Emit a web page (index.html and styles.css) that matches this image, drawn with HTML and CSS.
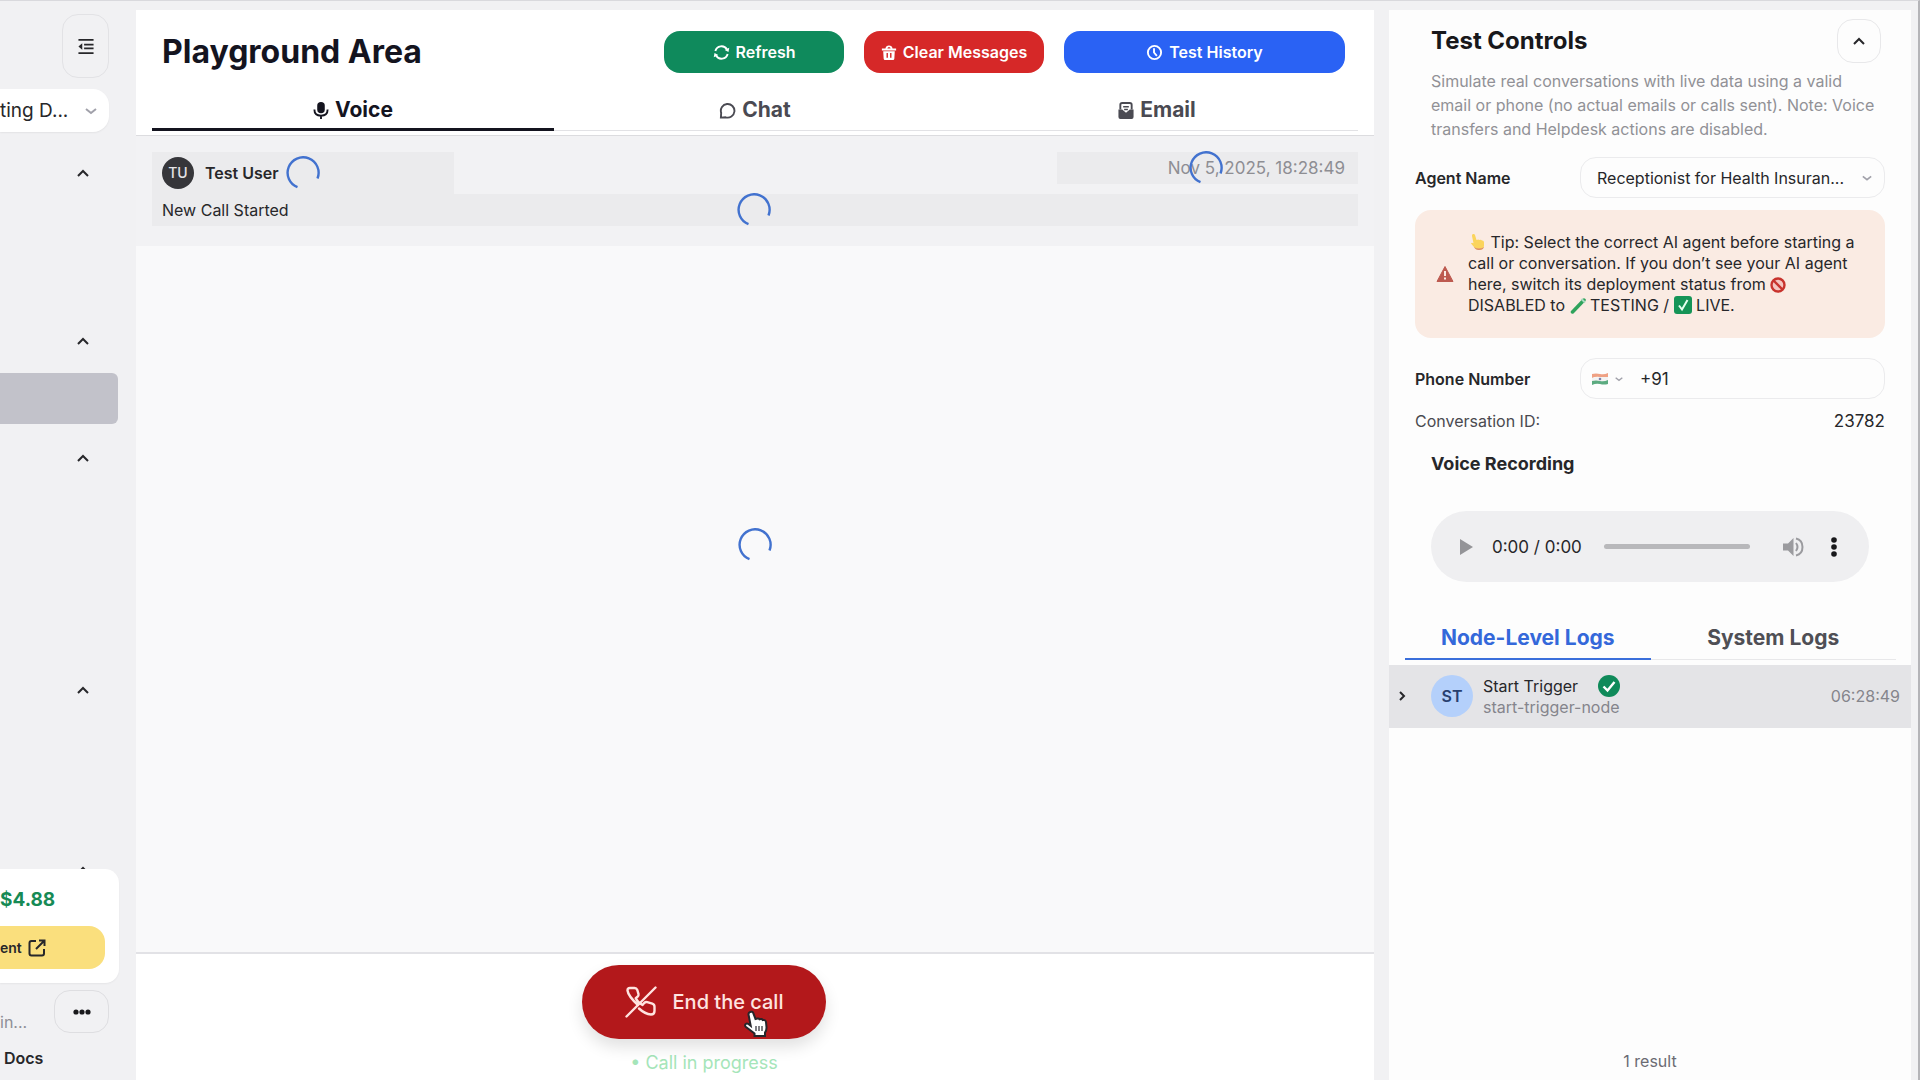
FILE: index.html
```html
<!DOCTYPE html>
<html lang="en">
<head>
    <meta charset="UTF-8">
    <meta name="viewport" content="width=device-width, initial-scale=1.0">
    <title>Playground Area</title>
    <link rel="stylesheet" href="styles.css">
</head>
<body>
<div class="app">

    <aside class="sidebar">
        <button class="collapse-btn" aria-label="Collapse sidebar">
            <svg width="18" height="17" viewBox="0 0 18 18" fill="none" stroke="currentColor" stroke-width="2"><path d="M1 2h16M7 7h10M7 11h10M1 16h16"/><path d="M5 5.500v7L1 9z" fill="currentColor" stroke="none"/></svg>
        </button>
        <div class="workspace">
            <select class="workspace-select" aria-label="Workspace"><option>ting D...</option></select>
            <svg class="select-arrow" width="12" height="12" viewBox="0 0 12 12" fill="none" stroke="currentColor" stroke-width="2"><path d="M1 4l5 4 5-4"/></svg>
        </div>
        <nav class="nav">
            <div class="nav-group"><button class="nav-toggle" aria-label="Toggle group"><svg width="14" height="14" viewBox="0 0 14 14"><path d="M2 10l5-5 5 5"/></svg></button></div>
            <div class="nav-group"><button class="nav-toggle" aria-label="Toggle group"><svg width="14" height="14" viewBox="0 0 14 14"><path d="M2 10l5-5 5 5"/></svg></button>
                <a href="#" class="nav-active" aria-label="Playground"></a>
            </div>
            <div class="nav-group"><button class="nav-toggle" aria-label="Toggle group"><svg width="14" height="14" viewBox="0 0 14 14"><path d="M2 10l5-5 5 5"/></svg></button></div>
            <div class="nav-group"><button class="nav-toggle" aria-label="Toggle group"><svg width="14" height="14" viewBox="0 0 14 14"><path d="M2 10l5-5 5 5"/></svg></button></div>
            <div class="nav-group"><button class="nav-toggle" aria-label="Toggle group"><svg width="14" height="14" viewBox="0 0 14 14"><path d="M2 10l5-5 5 5"/></svg></button></div>
        </nav>
        <div class="balance">
            <div class="amount">$4.88</div>
            <button class="pay-btn">ent
                <svg width="18" height="18" viewBox="0 0 18 18" fill="none" stroke="currentColor" stroke-width="2"><path d="M8 2H3.500Q1.500 2 1.500 4v10.500q0 2 2 2H14q2 0 2-2V10M11 1.500h5.500V7M16 2L8 10"/></svg>
            </button>
        </div>
        <div class="account">
            <span>in...</span>
            <button class="more-btn" aria-label="More"><svg width="18" height="6" viewBox="0 0 18 6" fill="currentColor"><circle cx="3" cy="3" r="2.600"/><circle cx="9" cy="3" r="2.600"/><circle cx="15" cy="3" r="2.600"/></svg></button>
        </div>
        <a href="#" class="docs">Docs</a>
    </aside>

    <main class="main">
        <header class="header">
            <div class="title-row">
                <h1>Playground Area</h1>
                <div class="actions">
                    <button class="btn green">
                        <svg width="17" height="17" viewBox="0 0 18 18" fill="none" stroke="currentColor" stroke-width="2"><path d="M2.500 7.500A6.700 6.700 0 0 1 14.800 5.800M15.500 10.500A6.700 6.700 0 0 1 3.200 12.200"/><path d="M17.200 4l-.8 4.500-4-2.200zM.8 14l.8-4.500 4 2.200z" fill="currentColor" stroke="none"/></svg>
                        Refresh
                    </button>
                    <button class="btn red">
                        <svg width="16" height="17" viewBox="0 0 18 18" fill="currentColor"><path fill-rule="evenodd" d="M5 4.500Q5.500 1 9 1t4 3.500H17v2.200H1V4.500zM7.200 4.500h3.600Q10.500 2.800 9 2.800T7.200 4.500zM2.500 7.500h13l-.5 8.500q-.1 1.500-1.500 1.500h-9Q3.100 17.500 3 16zM6.200 9.500v5.500h1.600V9.500zm4 0v5.500h1.600V9.500z"/></svg>
                        Clear Messages
                    </button>
                    <button class="btn blue">
                        <svg width="17" height="17" viewBox="0 0 18 18" fill="none" stroke="currentColor" stroke-width="2"><circle cx="9" cy="9" r="7"/><path d="M8.500 4.500V9l3 3.500"/></svg>
                        Test History
                    </button>
                </div>
            </div>
            <div class="tabs">
                <button class="tab active">
                    <svg width="16" height="17" viewBox="0 0 16 18" fill="none" stroke="currentColor" stroke-width="2"><rect x="4" y="0" width="8" height="12" rx="4" fill="currentColor" stroke="none"/><path d="M1 8q0 6.500 7 6.500T15 8M8 14.500V18"/></svg>
                    Voice
                </button>
                <button class="tab">
                    <svg width="17" height="17" viewBox="0 0 18 18" fill="none" stroke="currentColor" stroke-width="2"><path d="M2 16.500l.3-5A7.200 7.200 0 1 1 7 16.200z"/></svg>
                    Chat
                </button>
                <button class="tab">
                    <svg width="16" height="17" viewBox="0 0 16 18"><path d="M2 8V3q0-2 2-2h8q2 0 2 2v5" fill="none" stroke="currentColor" stroke-width="2"/><path d="M5 5h6M6 8h4" stroke="currentColor" stroke-width="1.500"/><path d="M0 8l4 0 4 3.500L12 8h4v8q0 2-2 2H2q-2 0-2-2z" fill="currentColor"/></svg>
                    Email
                </button>
            </div>
        </header>

        <section class="conversation">
            <div class="message">
                <div class="message-top">
                    <div class="user">
                        <span class="avatar">TU</span>
                        <strong>Test User</strong>
                        <svg class="spinner" viewBox="0 0 34 34"><path d="M11.500 31.200A15.500 15.500 0 1 1 31.500 22.500"/></svg>
                    </div>
                    <div class="date">Nov 5, 2025, 18:28:49
                        <svg class="spinner over" viewBox="0 0 34 34"><path d="M11.500 31.200A15.500 15.500 0 1 1 31.500 22.500"/></svg>
                    </div>
                </div>
                <div class="message-text">New Call Started
                    <svg class="spinner over" viewBox="0 0 34 34"><path d="M11.500 31.200A15.500 15.500 0 1 1 31.500 22.500"/></svg>
                </div>
            </div>
            <div class="loading">
                <svg class="spinner" viewBox="0 0 34 34"><path d="M11.500 31.200A15.500 15.500 0 1 1 31.500 22.500"/></svg>
            </div>
        </section>

        <footer class="call-bar">
            <button class="end-call">
                <svg width="32" height="32" viewBox="0 0 32 32" fill="none" stroke="currentColor" stroke-width="2.400" stroke-linecap="round" stroke-linejoin="round"><path d="M1.500 30.500L30.500 1.500"/><path d="M13 19C7.500 14 3 8.500 2.500 4.500Q2.500 2 5 2h4.500q2 0 2.800 2l1.200 4.200q.3 1.600-1 2.600l-1.800 1.400q2 4.200 6.800 6.800l1.900-2.200q1.200-1.200 2.900-.7l5 1.600q2.200.8 2.200 3v4.300q0 3.500-3.500 3.500-6-.4-12-6"/></svg>
                End the call
                <svg class="pointer" width="26" height="28" viewBox="0 0 26 28"><path d="M7 2q2.500-1 3.300 1.200L12.500 9l2-.5q1.500-.2 2 .8 2.500-1 3.200.8 2.800-.7 3.300 2l.5 5q.2 3-1.500 5.500V26H11.500v-2.500L3 17q-2-2 0-3.200 1.500-.7 3.700 1.200l1 .8L5.500 4.500Q5.300 2.600 7 2z" fill="#fff" stroke="#26262b" stroke-width="2"/><path d="M13 16v5M16 16v5M19 16v5" stroke="#55555c" stroke-width="1.500"/></svg>
            </button>
            <p class="call-status">• Call in progress</p>
        </footer>
    </main>

    <aside class="panel">
        <div class="panel-head">
            <h2>Test Controls</h2>
            <button class="panel-toggle" aria-label="Collapse panel"><svg width="14" height="14" viewBox="0 0 14 14"><path d="M2 10l5-5 5 5"/></svg></button>
        </div>
        <p class="description">Simulate real conversations with live data using a valid email or phone (no actual emails or calls sent). Note: Voice transfers and Helpdesk actions are disabled.</p>

        <div class="form">
            <div class="field">
                <label for="agent">Agent Name</label>
                <div class="control">
                    <select id="agent" class="agent-select"><option>Receptionist for Health Insuran...</option></select>
                    <svg class="select-arrow" width="10" height="12" viewBox="0 0 12 12" fill="none" stroke="currentColor" stroke-width="2"><path d="M1 4l5 4 5-4"/></svg>
                </div>
            </div>

            <div class="tip">
                <svg class="warning" width="18" height="18" viewBox="0 0 18 18"><path d="M9 1.500L17 16.500H1z" fill="#bd5a50" stroke="#bd5a50" stroke-linejoin="round"/><path d="M9 6v5M9 12.500v2" stroke="#fbeae3" stroke-width="2"/></svg>
                <p>
                    <svg class="emoji" width="18" height="18" viewBox="0 0 18 18"><path d="M5 1q1.500-.5 2 1l1.500 5q2-1 3 0 1.800-.6 2.500.6 2-.2 2 1.900v3q0 4.500-5 4.500-3.500 0-5-3L3 10.500q.5-1.500 2.500-.3L4 3Q3.700 1.400 5 1z" fill="#fbd45c"/><path d="M6 14q1.500 3 5 3 4 0 5-3-2 1.500-5 1.500T6 14z" fill="#dc8a70"/></svg>
                    Tip: Select the correct AI agent before starting a call or conversation. If you don’t see your AI agent here, switch its deployment status from
                    <svg class="emoji" width="16" height="16" viewBox="0 0 16 16" fill="none" stroke="#c8332d" stroke-width="2.400"><circle cx="8" cy="8" r="6.500" fill="#f4c5c0"/><path d="M3.500 3.500l9 9"/></svg>
                    DISABLED to
                    <svg class="emoji" width="16" height="16" viewBox="0 0 16 16"><path d="M14 2L2.500 14" stroke="#2fa35c" stroke-width="3.500" stroke-linecap="round"/><path d="M11.500 1l3.500 3.500" stroke="#a9d9c0" stroke-width="2"/></svg>
                    TESTING /
                    <svg class="emoji" width="18" height="18" viewBox="0 0 18 18"><rect x="0" y="0" width="18" height="18" rx="3" fill="#159457"/><path d="M5 9.500l3 4L13.500 4" fill="none" stroke="#e4fff0" stroke-width="2"/></svg>
                    LIVE.
                </p>
            </div>

            <div class="field">
                <label for="phone">Phone Number</label>
                <div class="control phone">
                    <button class="country" aria-label="Country">
                        <svg width="16" height="12" viewBox="0 0 16 12"><path fill="#efa184" d="M0 1q4-1 8 0t8-1v4q-4 1-8 0T0 5z"/><path fill="#f3f3f3" d="M0 5q4-1 8-1t8 0v4H0z"/><path fill="#5cab80" d="M0 8q4-1 8 0t8-1v4q-4 1-8 0t-8 1z"/><circle cx="8" cy="6" r="1.300" fill="#7d83ad"/></svg>
                        <svg width="8" height="8" viewBox="0 0 12 12" fill="none" stroke="#a1a1aa" stroke-width="2"><path d="M1 4l5 4 5-4"/></svg>
                    </button>
                    <input id="phone" type="tel" value="+91">
                </div>
            </div>

            <div class="conversation-id"><span>Conversation ID:</span><span class="id">23782</span></div>
        </div>

        <h3>Voice Recording</h3>
        <div class="player">
            <button aria-label="Play"><svg width="14" height="16" viewBox="0 0 14 16" fill="#949498"><path d="M0 0l13 8-13 8z"/></svg></button>
            <span class="time">0:00 / 0:00</span>
            <input class="seek" type="range" min="0" max="100" value="0" aria-label="Seek">
            <button class="volume" aria-label="Volume"><svg width="22" height="20" viewBox="0 0 22 20"><path d="M1 6.500h5L11.500 1v18L6 13.500H1z" fill="#9b9b9f"/><path d="M14 6q3 4 0 8M14 1.500q6.500 1.500 6.500 8.500T14 18.500" fill="none" stroke="#9b9b9f" stroke-width="2"/></svg></button>
            <button aria-label="Player options"><svg width="6" height="20" viewBox="0 0 6 20" fill="#18181b"><circle cx="3" cy="3" r="2.800"/><circle cx="3" cy="10" r="2.800"/><circle cx="3" cy="17" r="2.800"/></svg></button>
        </div>

        <div class="log-tabs">
            <button class="log-tab active">Node-Level Logs</button>
            <button class="log-tab">System Logs</button>
        </div>
        <div class="log-row">
            <svg class="expand" width="10" height="12" viewBox="0 0 10 12"><path d="M3 2l4 4-4 4"/></svg>
            <span class="node-avatar">ST</span>
            <div class="node">
                <div class="node-name">Start Trigger
                    <svg width="22" height="22" viewBox="0 0 22 22"><circle cx="11" cy="11" r="11" fill="#0f8a5a"/><path d="M5.500 11.500l4 4 7-8.500" fill="none" stroke="#fff" stroke-width="2.400"/></svg>
                </div>
                <div class="node-id">start-trigger-node</div>
            </div>
            <time>06:28:49</time>
        </div>
        <p class="results">1 result</p>
    </aside>

</div>
</body>
</html>
```
FILE: styles.css
```css
* {
    box-sizing: border-box;
}

body {
    margin: 0;
    font-family: Inter, 'Liberation Sans', sans-serif;
    font-size: 16px;
    line-height: 20px;
    color: #27272a;
    background: #f1f1f3;
}

h1, h2, h3, p {
    margin: 0;
}

button, select, input {
    font: inherit;
    color: inherit;
}

button {
    display: flex;
    align-items: center;
    justify-content: center;
    padding: 0;
    border: none;
    background: none;
    cursor: pointer;
}

a {
    color: inherit;
    text-decoration: none;
}

select {
    appearance: none;
    width: 100%;
    background: transparent;
}

svg {
    flex-shrink: 0;
}

.app {
    display: grid;
    grid-template-columns: 136px 1fr 537px;
    min-height: 100vh;
    padding: 9px 7px 0 0;
    border-top: 1px solid #d9d9dd;
    border-right: 2px solid #b4b4b8;
}

/* Sidebar */
.sidebar {
    display: flex;
    flex-direction: column;
    align-items: flex-end;
    height: calc(100vh - 10px);
    padding-right: 27px;
    overflow: hidden;
}

.collapse-btn {
    width: 47px;
    height: 64px;
    margin: 4px 0 11px;
    flex-shrink: 0;
    border: 1px solid #e2e2e5;
    border-radius: 16px;
}

.workspace {
    position: relative;
    width: 100%;
    height: 43px;
    flex-shrink: 0;
    border-radius: 0 16px 16px 0;
    background: #fff;
    box-shadow: 0 1px 2px rgba(0, 0, 0, 0.06);
}

.workspace-select {
    height: 43px;
    padding: 0;
    border: none;
    font-size: 19px;
}

.select-arrow {
    position: absolute;
    top: 50%;
    right: 12px;
    margin-top: -6px;
    color: #a1a1aa;
    pointer-events: none;
}

.nav {
    display: grid;
    grid-template-rows: 168px 117px 232px 180px 40px;
    flex: 1;
    width: 118px;
    min-height: 0;
    margin-right: -9px;
    padding-top: 21px;
    overflow: hidden;
}

.nav-toggle {
    width: 50px;
    height: 40px;
    margin: 0 10px 0 auto;
}

.nav-toggle svg, .panel-toggle svg, .expand {
    fill: none;
    stroke: #27272a;
    stroke-width: 2;
}

.nav-active {
    display: block;
    height: 51px;
    margin-top: 12px;
    border-radius: 0 6px 6px 0;
    background: #c2c2ca;
}

.balance {
    width: 119px;
    height: 114px;
    margin-right: -10px;
    padding: 21px 14px 14px 0;
    border-radius: 0 14px 14px 0;
    background: #fff;
    box-shadow: 0 1px 2px rgba(0, 0, 0, 0.05);
}

.amount {
    font-size: 19px;
    font-weight: 700;
    color: #168a55;
}

.pay-btn {
    justify-content: flex-start;
    gap: 6px;
    width: 100%;
    height: 43px;
    margin-top: 16px;
    border-radius: 0 16px 16px 0;
    background: #fadf7d;
    font-size: 14px;
    font-weight: 600;
}

.account {
    display: flex;
    align-items: center;
    justify-content: space-between;
    width: 100%;
    margin-top: 7px;
    color: #8e8e96;
}

.account span {
    padding-top: 20px;
}

.more-btn {
    width: 55px;
    height: 43px;
    border: 1px solid #dedee1;
    border-radius: 16px;
    color: #18181b;
}

.docs {
    width: 100%;
    margin: 15px 0 12px;
    padding-left: 4px;
    font-weight: 600;
}

/* Playground */
.main {
    display: flex;
    flex-direction: column;
    background: #f9f9fa;
}

.header {
    padding: 21px 16px 4px;
    border-bottom: 1px solid #dcdcdf;
    background: #fff;
}

.title-row {
    display: flex;
    align-items: center;
    justify-content: space-between;
    padding: 0 13px 0 10px;
}

h1 {
    font-size: 32px;
    line-height: 42px;
    font-weight: 700;
    color: #14141f;
}

.actions {
    display: grid;
    grid-template-columns: 180px 180px 281px;
    gap: 20px;
}

.btn {
    gap: 6px;
    height: 42px;
    border-radius: 16px;
    font-weight: 600;
    color: #fff;
}

.green {
    background: #0f8a5c;
}

.red {
    background: #d62828;
}

.blue {
    background: #2a62f4;
}

.tabs {
    display: grid;
    grid-template-columns: repeat(3, 1fr);
    margin-top: 15px;
}

.tab {
    gap: 6px;
    height: 43px;
    padding-top: 2px;
    border-bottom: 1px solid #e2e2e5;
    font-size: 21px;
    font-weight: 700;
    color: #4a4a52;
}

.tab.active {
    border-color: #14141f;
    box-shadow: inset 0 -2px #14141f;
    color: #14141f;
}

.conversation {
    display: flex;
    flex-direction: column;
    flex: 1;
}

.message {
    padding: 16px 16px 20px;
    background: #f2f2f4;
}

.message-top {
    display: flex;
    align-items: flex-start;
    justify-content: space-between;
}

.user, .date {
    width: 25%;
    background: #ebebed;
}

.user {
    display: flex;
    align-items: center;
    height: 42px;
    padding-left: 10px;
}

.user strong {
    margin: 0 7px 0 11px;
    font-weight: 600;
}

.avatar {
    width: 32px;
    border-radius: 50%;
    background: #36363a;
    color: #e4e4e7;
    font-size: 14px;
    font-weight: 500;
    line-height: 32px;
    text-align: center;
}

.date {
    position: relative;
    padding-right: 13px;
    line-height: 32px;
    font-size: 17px;
    text-align: right;
    color: #8e8e93;
}

.message-text {
    position: relative;
    padding-left: 10px;
    background: #ebebed;
    line-height: 32px;
}

.spinner {
    width: 34px;
    height: 34px;
    fill: none;
    stroke: #4272cf;
    stroke-width: 2.4;
}

.spinner.over {
    position: absolute;
    top: 50%;
    left: 50%;
    margin: -17px 0 0 -18px;
}

.loading {
    display: flex;
    justify-content: center;
    flex: 1;
    padding-top: 282px;
}

.call-bar {
    display: flex;
    flex-direction: column;
    align-items: center;
    height: 128px;
    padding: 11px 102px 0 0;
    border-top: 2px solid #e2e2e6;
    background: #fff;
}

.end-call {
    position: relative;
    gap: 16px;
    width: 244px;
    height: 74px;
    border-radius: 37px;
    background: #b3181b;
    box-shadow: 0 8px 16px rgba(0, 0, 0, 0.12);
    color: #ffe4e0;
    font-size: 20px;
    font-weight: 500;
}

.pointer {
    position: absolute;
    right: 57px;
    bottom: 1px;
}

.call-status {
    margin-top: 14px;
    font-size: 18px;
    color: #a5e5b9;
}

/* Test controls */
.panel {
    display: flex;
    flex-direction: column;
    margin-left: 15px;
    padding-bottom: 9px;
    background: #fdfdfd;
}

.panel-head {
    display: flex;
    align-items: center;
    justify-content: space-between;
    padding: 9px 30px 0 42px;
}

h2 {
    font-size: 24px;
    font-weight: 700;
    color: #18181b;
}

.panel-toggle {
    width: 44px;
    height: 44px;
    border: 1px solid #e8e8ea;
    border-radius: 16px;
}

.description {
    padding: 6px 30px 0 42px;
    line-height: 24px;
    color: #919196;
}

.form {
    display: flex;
    flex-direction: column;
    padding: 16px 26px 0;
}

.field {
    display: flex;
    align-items: center;
    justify-content: space-between;
}

.field label {
    font-weight: 600;
}

.control {
    position: relative;
    width: 305px;
    height: 41px;
    border: 1px solid #ebebed;
    border-radius: 16px;
}

.agent-select {
    height: 39px;
    padding: 0 16px;
    border: none;
}

.tip {
    display: flex;
    align-items: center;
    gap: 14px;
    margin: 12px 0 20px;
    padding: 22px 24px 22px 21px;
    border-radius: 16px;
    background: #faebe3;
}

.tip p {
    line-height: 21px;
}

.emoji {
    vertical-align: -3px;
}

.phone {
    display: flex;
    align-items: center;
}

.country {
    gap: 7px;
    padding-left: 11px;
}

.phone input {
    width: 100%;
    min-width: 0;
    padding: 0 17px;
    border: none;
    outline: none;
    background: transparent;
    font-size: 17px;
}

.conversation-id {
    display: flex;
    justify-content: space-between;
    padding-top: 12px;
    color: #4a4a50;
}

.id {
    font-size: 17px;
    color: #27272a;
}

h3 {
    padding: 23px 42px 0;
    font-size: 18px;
    font-weight: 700;
}

.player {
    display: flex;
    align-items: center;
    height: 71px;
    margin: 37px 42px 0;
    padding: 0 32px 0 29px;
    border-radius: 36px;
    background: #efeff1;
}

.time {
    margin: 0 22px 0 18px;
    font-size: 17px;
    white-space: nowrap;
}

.seek {
    appearance: none;
    flex: 1;
    min-width: 0;
    height: 5px;
    margin: 0;
    border-radius: 3px;
    background: #b8b8bb;
}

.seek::-webkit-slider-thumb {
    appearance: none;
    width: 0;
    height: 0;
}

.volume {
    margin: 0 27px 0 32px;
}

.log-tabs {
    display: grid;
    grid-template-columns: 1fr 1fr;
    margin: 35px 15px 5px 16px;
}

.log-tab {
    height: 43px;
    border-bottom: 1px solid #e8e8ea;
    font-size: 21px;
    font-weight: 700;
    color: #4f4f55;
}

.log-tab.active {
    border-bottom: 2px solid #3b6fdb;
    color: #3468da;
}

.log-row {
    display: flex;
    align-items: center;
    height: 63px;
    padding: 0 11px 2px 8px;
    background: #e4e4e7;
}

.node-avatar {
    width: 42px;
    margin: 0 10px 0 24px;
    border-radius: 50%;
    background: #b4d0fb;
    color: #27406f;
    font-weight: 600;
    line-height: 42px;
    text-align: center;
}

.node {
    flex: 1;
}

.node-name {
    display: flex;
    align-items: center;
    gap: 20px;
}

.node-id, .log-row time {
    color: #85858c;
}

.results {
    margin-top: auto;
    text-align: center;
    color: #6b6b73;
}
```
